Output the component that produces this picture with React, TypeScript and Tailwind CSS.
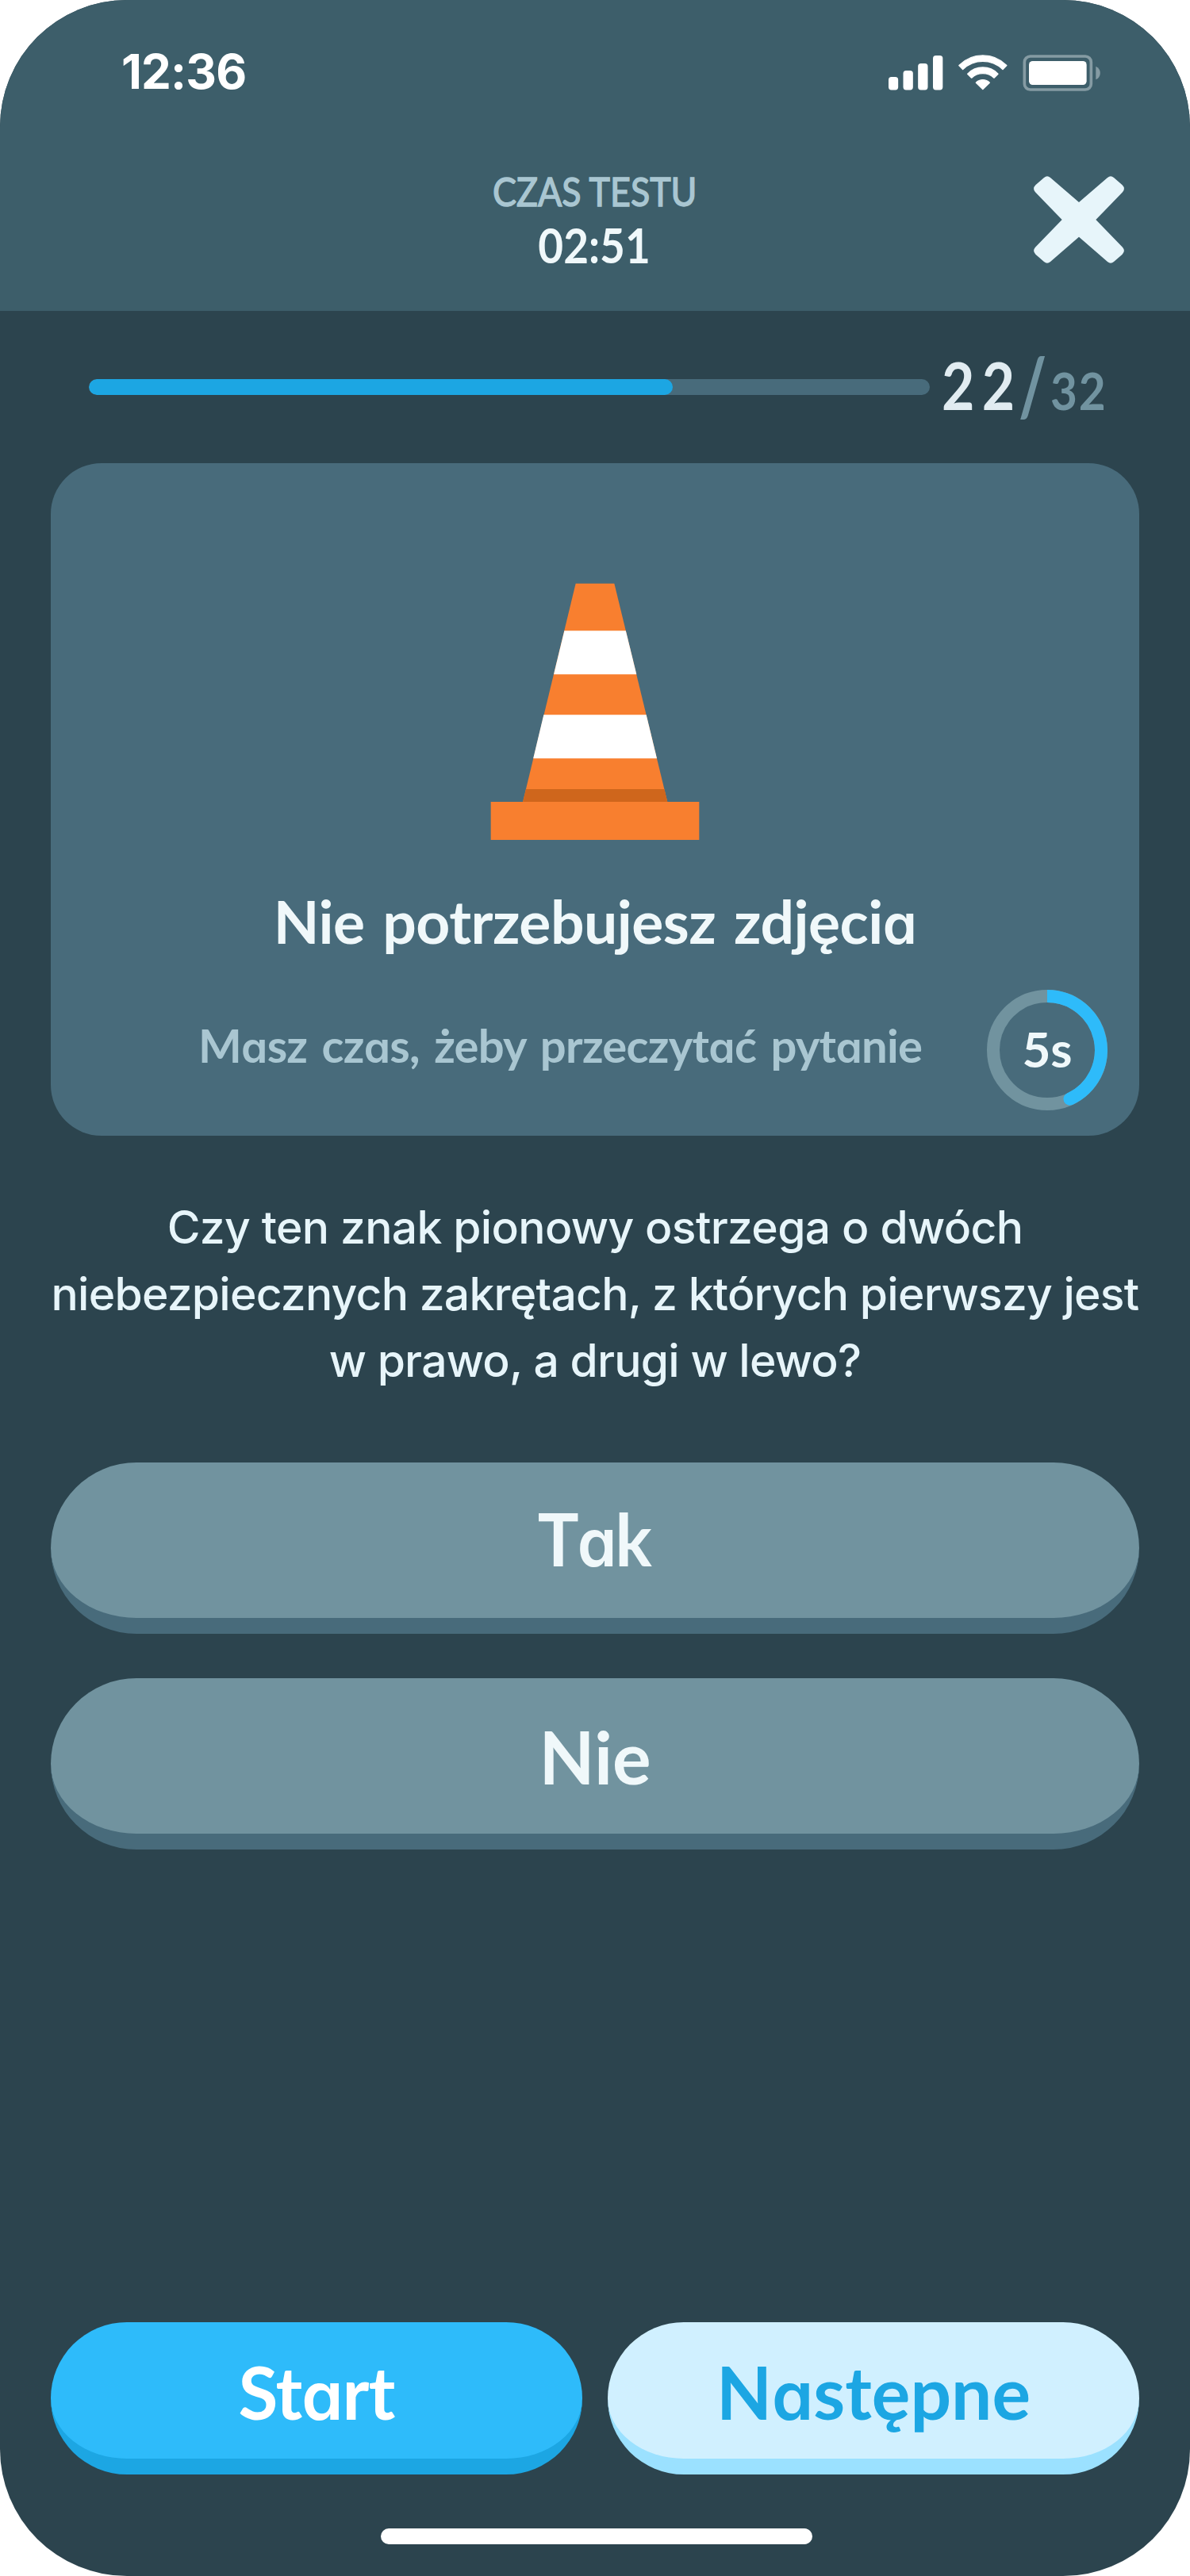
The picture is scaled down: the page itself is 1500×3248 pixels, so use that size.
import { Fragment } from "react";

const current = 22;
const total = 32;
const progressPercent = 69.4;

/** Display lettering: Lato with a single-storey "a" borrowed from Inter. */
function Display({ children }: { children: string }) {
  const parts = children.split("a");
  return (
    <>
      {parts.map((part, i) => (
        <Fragment key={i}>
          {i > 0 && (
            <span className="font-['Inter'] text-[0.92em] font-semibold [font-feature-settings:'cv11']">a</span>
          )}
          {part}
        </Fragment>
      ))}
    </>
  );
}

function StatusIcons() {
  return (
    <svg className="mb-[2px] h-[48px] w-[268px]" viewBox="60 54 804 144" fill="white">
      <rect x="60" y="141" width="36.500" height="49.500" rx="11" />
      <rect x="115.500" y="117" width="37" height="73.500" rx="11" />
      <rect x="171.500" y="90" width="37" height="100.500" rx="11" />
      <rect x="228" y="60" width="37" height="130.500" rx="11" />
      <g stroke="white" strokeWidth="4" strokeLinejoin="round">
        <path d="M326.500 97.500A126 126 0 0 1 506.500 97.500L492 112.500A109 109 0 0 0 341 112.500Z" />
        <path d="M359 129.500A80 80 0 0 1 474 129.500L459 144.500A62 62 0 0 0 374 144.500Z" />
        <path d="M391 162.500A36 36 0 0 1 442 162.500L416.500 187.500Z" />
      </g>
      <rect x="574" y="63" width="252" height="126" rx="22" fill="none" stroke="#859ba3" strokeWidth="11" />
      <rect x="591" y="81" width="218" height="90" rx="14" />
      <path d="M844 101C866 110 866 142 844 151Z" fill="#859ba3" />
    </svg>
  );
}

function CloseIcon() {
  const arm =
    "M780 612L888 519Q900 509 912 519L944 547Q957 560 945 574L844 678L945 782Q957 796 944 809L912 837Q900 847 888 837L780 743L672 837Q660 847 648 837L616 809Q603 796 615 782L716 678L615 574Q603 560 616 547L648 519Q660 509 672 519Z";
  return (
    <svg className="h-[110px] w-[114px]" viewBox="609 513 342 330">
      <path d={arm} fill="#e7f5fa" />
    </svg>
  );
}

function TrafficCone() {
  return (
    <svg className="mt-[151px] h-[324px] w-[264px]" viewBox="174 104 792 972">
      <path d="M497 106H643L844 933H297Z" fill="#f87f2f" />
      <path d="M454 285H686.500L727 450H414Z" fill="white" />
      <path d="M376 603H764L804 768H336.500Z" fill="white" />
      <path d="M309 884H832.500L844 933H297Z" fill="#cf661c" />
      <path d="M176 932H964V1077H176Z" fill="#f87f2f" />
    </svg>
  );
}

function Countdown() {
  return (
    <div className="relative flex size-[152px] items-center justify-center">
      <svg className="absolute inset-0 size-full" viewBox="0 0 152 152" fill="none" strokeWidth="16">
        <circle cx="76" cy="76" r="68" stroke="#71939f" />
        <path d="M76 8A68 68 0 0 1 104.500 137.700" stroke="#2ebbfa" />
        <circle cx="104.500" cy="137.700" r="8" fill="#2ebbfa" />
      </svg>
      <span className="relative pb-[4px] text-[62px] leading-[64px] font-bold text-[#f0f8fa]">5s</span>
    </div>
  );
}

function Answer({ label, fit = "" }: { label: string; fit?: string }) {
  return (
    <button className="flex h-[216px] w-full items-center justify-center rounded-[108px] border-b-[20px] border-[#486b7b] bg-[#71939f] pt-[1px] text-[91px] leading-[100px] font-bold text-[#f0f8fa]">
      <span className={fit}>
        <Display>{label}</Display>
      </span>
    </button>
  );
}

export default function App() {
  return (
    <div className="h-[3248px] w-[1500px] bg-white font-['Lato',sans-serif]">
      <main className="flex h-full flex-col overflow-hidden rounded-[160px] bg-[#2c444e]">
        <header className="flex h-[392px] shrink-0 flex-col bg-[#3d5e6a] pt-[62px]">
          <div className="flex h-[56px] items-end justify-between pr-[112px] pl-[153px]">
            <span className="font-['Inter'] text-[60px] leading-[56px] font-bold tracking-[-0.8px] text-white">
              12:36
            </span>
            <StatusIcons />
          </div>
          <div className="mt-[95px] flex items-center justify-between px-[83px]">
            <div className="w-[114px]" />
            <div className="flex flex-col items-center gap-[7px] whitespace-nowrap">
              <span className="scale-x-[0.895] text-[50px] leading-[56px] text-[#a9c6d1] [-webkit-text-stroke:1.5px_#a9c6d1]">
                CZAS TESTU
              </span>
              <span className="scale-x-[0.885] pr-[2px] text-[62px] leading-[64px] font-bold text-[#f0f8fa]">02:51</span>
            </div>
            <button aria-label="Zamknij">
              <CloseIcon />
            </button>
          </div>
        </header>

        <div className="flex h-[192px] shrink-0 items-center pl-[112px]">
          <div className="h-[20px] w-[1060px] overflow-hidden rounded-full bg-[#486b7b]">
            <div className="h-full rounded-full bg-[#1ca6e3]" style={{ width: `${progressPercent}%` }} />
          </div>
          <div className="ml-[15px] flex items-baseline pb-[5px] leading-[100px]">
            <span className="w-[99px] origin-left scale-x-[0.86] text-[83px] font-bold tracking-[11px] text-[#e1ecf1]">
              {current}
            </span>
            <span className="relative top-[5px] w-[38px] origin-left scale-x-[0.72] text-[96px] text-[#7193a0] [-webkit-text-stroke:4px_#7193a0]">
              /
            </span>
            <span className="origin-left scale-x-[0.9] text-[65px] font-bold tracking-[2px] text-[#7193a0]">{total}</span>
          </div>
        </div>

        <div className="flex grow flex-col px-[64px]">
          <section className="flex h-[848px] shrink-0 flex-col items-center rounded-[64px] bg-[#486b7b]">
            <TrafficCone />
            <h1 className="mt-[62px] text-[75px] leading-[80px] font-bold tracking-[-0.5px] [word-spacing:5px] whitespace-nowrap text-[#f0f8fa]">
              <Display>Nie potrzebujesz zdjęcia</Display>
            </h1>
            <div className="mt-[43px] flex h-[152px] w-full items-center justify-between pr-[40px] pl-[186px]">
              <p className="pb-[9px] text-[58px] leading-[64px] font-bold tracking-[-0.75px] [word-spacing:5px] whitespace-nowrap text-[#a9c6d1]">
                <Display>Masz czas, żeby przeczytać pytanie</Display>
              </p>
              <Countdown />
            </div>
          </section>

          <p className="mt-[74px] text-center font-['Inter'] text-[57px] leading-[84px] font-medium tracking-[-0.75px] whitespace-nowrap text-[#e7f5fa]">
            <span className="tracking-[-0.65px]">Czy ten znak pionowy ostrzega o dwóch</span>
            <br />
            niebezpiecznych zakrętach, z których pierwszy jest
            <br />w prawo, a drugi w lewo?
          </p>

          <div className="mt-[86px] flex flex-col gap-[56px]">
            <Answer label="Tak" fit="scale-x-[0.95] tracking-[-2px] pr-[3px]" />
            <Answer label="Nie" />
          </div>

          <footer className="mt-auto grid grid-cols-2 gap-[32px] text-[91px] leading-[100px] font-bold">
            <button className="flex h-[192px] items-center justify-center rounded-[96px] border-b-[20px] border-[#1ca6e3] bg-[#2ebbfa] pt-[9px] text-white">
              <span className="tracking-[-1px]">
                <Display>Start</Display>
              </span>
            </button>
            <button className="flex h-[192px] items-center justify-center rounded-[96px] border-b-[20px] border-[#9be1ff] bg-[#d0f0ff] pt-[9px] text-[#1ca6e3]">
              <span>
                <Display>Następne</Display>
              </span>
            </button>
          </footer>
          <div className="mt-[68px] mb-[40px] ml-[416px] h-[20px] w-[544px] rounded-full bg-white" />
        </div>
      </main>
    </div>
  );
}
